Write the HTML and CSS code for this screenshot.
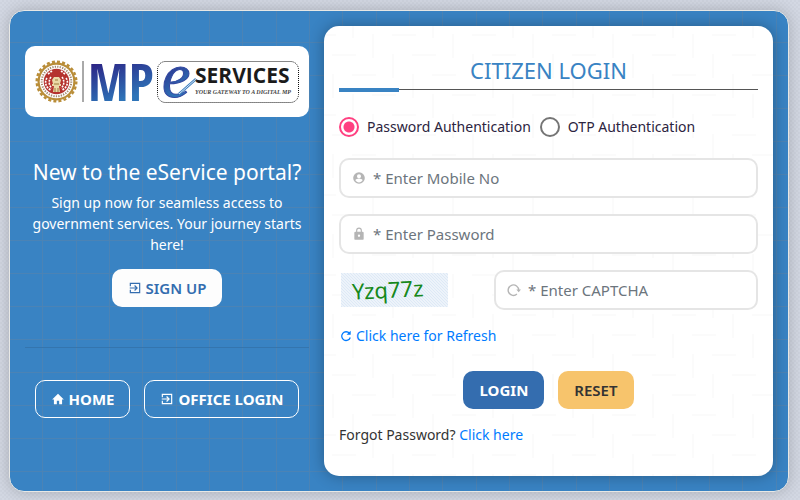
FILE: index.html
```html
<!DOCTYPE html>
<html lang="en">
<head>
<meta charset="utf-8">
<meta name="viewport" content="width=device-width, initial-scale=1">
<title>MP eServices - Citizen Login</title>
<link rel="stylesheet" href="styles.css">
</head>
<body>
<svg class="defs" aria-hidden="true">
  <symbol id="enter" viewBox="0 0 24 24"><path fill="currentColor" d="M3 3h18v18H3v-6h2v4h14V5H5v4H3zm9 4l5 5-5 5-1.400-1.400L13.200 13H3v-2h10.200l-2.600-2.600z"/></symbol>
  <symbol id="home" viewBox="0 0 24 24"><path fill="currentColor" d="M12 3L2 13h3v8h5v-6h4v6h5v-8h3z"/></symbol>
  <symbol id="user" viewBox="0 0 24 24"><path fill="currentColor" fill-rule="evenodd" d="M12 2a10 10 0 1 0 0 20 10 10 0 0 0 0-20zm0 3.500a3.500 3.500 0 1 1 0 7 3.500 3.500 0 0 1 0-7zM12 19.500c-2.700 0-5-1.400-6.200-3.500.1-2 4.200-3.200 6.200-3.200s6.100 1.200 6.200 3.200c-1.200 2.100-3.500 3.500-6.200 3.500z"/></symbol>
  <symbol id="lock" viewBox="0 0 24 24"><path fill="currentColor" fill-rule="evenodd" d="M18 8h-1V6A5 5 0 0 0 7 6v2H6a2 2 0 0 0-2 2v10a2 2 0 0 0 2 2h12a2 2 0 0 0 2-2V10a2 2 0 0 0-2-2zM9 6a3 3 0 0 1 6 0v2H9zm3 7a2 2 0 1 1 0 4 2 2 0 0 1 0-4z"/></symbol>
  <symbol id="rotate" viewBox="0 0 24 24"><path fill="none" stroke="currentColor" stroke-width="2.400" d="M17 19A9 9 0 1 1 20 12"/><path fill="currentColor" d="M16 11h8l-4 5z"/></symbol>
  <symbol id="refresh" viewBox="0 0 24 24"><path fill="none" stroke="currentColor" stroke-width="2.200" d="M18 7.500a7.500 7.500 0 1 0 1.300 7"/><path fill="currentColor" d="M20 3v7h-7z"/></symbol>
</svg>
<main class="shell">
  <section class="intro">
    <div class="brand">
      <svg class="logo" viewBox="0 0 264 43" role="img" aria-label="MP eServices, your gateway to a digital MP">
        <defs>
          <linearGradient id="ink" x1="0" y1="0" x2="0.300" y2="1"><stop offset="0.200" stop-color="#2c1c80"/><stop offset="0.850" stop-color="#2e74b8"/></linearGradient>
        </defs>
        <circle cx="21.500" cy="21.500" r="19" fill="#b98d38"/>
        <circle cx="21.500" cy="21.500" r="19.800" fill="none" stroke="#b98d38" stroke-width="2.400" stroke-dasharray="3 2.180"/>
        <circle cx="21.500" cy="21.500" r="16.800" fill="#fff"/>
        <circle cx="21.500" cy="21.500" r="14.800" fill="none" stroke="#a58b70" stroke-width="2" stroke-dasharray="1.300 1.200"/>
        <circle cx="21.500" cy="21.500" r="12.800" fill="#b5322e"/>
        <path d="M12 18c-3 4-1 10 4 12M16 17c-3 4-2 9 1 11M31 18c3 4 1 10-4 12M27 17c3 4 2 9-1 11M13 14l4-3M30 14l-4-3" stroke="#fff" stroke-width="1.600" fill="none" stroke-dasharray="2 1"/>
        <path d="M19 17h5l2 3-1 4h1v2h-2l1 6h-7l1-6h-2v-2h1l-1-4z" fill="#ead9a8"/>
        <path d="M20 20h3M19 24h5M20 28v4M23 28v4" stroke="#9f7b3b" stroke-width="1"/>
        <path d="M48 1v41" stroke="#555" stroke-width="1"/>
        <text class="logo-mp" x="53" y="41" fill="url(#ink)">MP</text>
        <rect x="122.500" y="1.500" width="141" height="41" rx="8" fill="none" stroke="#111" stroke-dasharray="1 1"/>
        <text class="logo-e" x="127" y="37" fill="url(#ink)">e</text>
        <path d="M144 34l17-15" stroke="#3b7dc0" stroke-width="2.400"/>
        <path d="M144 34l17-15" stroke="#fff" stroke-width="0.800"/>
        <text class="logo-name" x="160" y="23">SERVICES</text>
        <text class="logo-line" x="160" y="34">YOUR GATEWAY TO A DIGITAL MP</text>
      </svg>
    </div>
    <h2 class="intro-title">New to the eService portal?</h2>
    <p class="intro-text">Sign up now for seamless access to government services. Your journey starts here!</p>
    <a class="btn signup" href="#signup"><svg class="icon"><use href="#enter"/></svg>SIGN UP</a>
    <hr class="rule">
    <nav class="links">
      <a class="btn outline" href="#home"><svg class="icon"><use href="#home"/></svg>HOME</a>
      <a class="btn outline" href="#office"><svg class="icon"><use href="#enter"/></svg>OFFICE LOGIN</a>
    </nav>
  </section>
  <form class="panel">
    <h1 class="title">CITIZEN LOGIN</h1>
    <div class="modes">
      <label class="mode"><input type="radio" name="mode" checked>Password Authentication</label>
      <label class="mode"><input type="radio" name="mode">OTP Authentication</label>
    </div>
    <label class="field"><svg class="icon"><use href="#user"/></svg><input type="text" placeholder="* Enter Mobile No" aria-label="Mobile No"></label>
    <label class="field"><svg class="icon"><use href="#lock"/></svg><input type="password" placeholder="* Enter Password" aria-label="Password"></label>
    <div class="check">
      <svg class="captcha" viewBox="0 0 107 34">
        <defs><pattern id="weave" width="3" height="3" patternUnits="userSpaceOnUse"><rect width="3" height="3" fill="#edf3fa"/><path d="M0 0l3 3" stroke="#dde9f6" stroke-width="1"/></pattern></defs>
        <rect width="107" height="34" fill="url(#weave)"/>
        <text class="captcha-text" x="11" y="25" transform="rotate(-3 47 17)">Yzq77z</text>
      </svg>
      <label class="field"><svg class="icon"><use href="#rotate"/></svg><input type="text" placeholder="* Enter CAPTCHA" aria-label="CAPTCHA"></label>
    </div>
    <a class="refresh" href="#refresh"><svg class="icon"><use href="#refresh"/></svg>Click here for Refresh</a>
    <div class="actions">
      <button class="btn login" type="submit">LOGIN</button>
      <button class="btn reset" type="reset">RESET</button>
    </div>
    <p class="forgot">Forgot Password? <a href="#forgot">Click here</a></p>
  </form>
</main>
</body>
</html>
```
FILE: styles.css
```css
* { box-sizing: border-box; }

body {
  margin: 0;
  padding: 10px 11px 8px 9px;
  min-height: 100vh;
  display: flex;
  font: 14px/21px "Noto Sans", sans-serif;
  color: #333;
  background: repeating-conic-gradient(#ced3de 0 25%, #d3d8e3 0 50%) 0 0 / 4px 4px;
}

a { color: #007bff; text-decoration: none; }
h1, h2, p { margin: 0; font-weight: 400; }
.defs { position: absolute; width: 0; height: 0; }
.icon { width: 14px; height: 14px; flex: none; }

.shell {
  flex: 1;
  display: grid;
  grid-template-columns: 314px 1fr;
  padding: 15px 15px 15px 0;
  border: 1px solid #e8e8e5;
  border-radius: 15px;
  background:
    repeating-linear-gradient(90deg, transparent 0 32px, #4b83b5 32px 33px, transparent 33px 66px, #4b83b5 66px 67px, transparent 67px 99px, #4b83b5 99px 100px),
    repeating-linear-gradient(transparent 0 31px, #4b83b5 31px 32px, transparent 32px 33px),
    #3983c3;
  box-shadow: 0 0 15px rgba(0, 0, 0, .2);
}

.intro {
  display: flex;
  flex-direction: column;
  align-items: center;
  padding: 20px 15px 0;
  color: #fff;
  text-align: center;
}

.brand {
  width: 100%;
  padding: 14px 10px;
  border-radius: 10px;
  background: #fff;
}
.logo { display: block; width: 100%; overflow: visible; }
.logo-mp { font: 700 52px "Liberation Sans Narrow", "Open Sans Condensed", "Roboto Condensed", "DejaVu Sans Condensed", sans-serif; }
.logo-e { font: italic 400 64px "Liberation Serif", serif; stroke: #3348a0; stroke-width: 1px; }
.logo-name { font: 700 21px "Open Sans", sans-serif; fill: #1b1b1b; }
.logo-line { font: italic 700 6px "Liberation Serif", serif; fill: #444; }

.intro-title { margin-top: 40px; font-size: 21px; line-height: 30px; white-space: nowrap; }
.intro-text { margin-top: 5px; }

.btn {
  display: inline-flex;
  align-items: center;
  justify-content: center;
  gap: 4px;
  height: 38px;
  padding: 0 15px;
  border: 1px solid transparent;
  border-radius: 10px;
  font: 600 15px/21px "Noto Sans", sans-serif;
  white-space: nowrap;
}
.signup { margin-top: 14px; background: #fdfdfd; color: #346daf; }
.rule { width: 100%; margin: 40px 0 32px; border: 0; border-top: 1px solid #3475ae; }
.links { display: flex; gap: 14px; }
.outline { border-color: #fff; color: #fff; font-weight: 700; }

.panel {
  padding: 27px 15px 0;
  border-radius: 15px;
  background: #fff url("data:image/svg+xml,%3Csvg xmlns='http://www.w3.org/2000/svg' width='80' height='80'%3E%3Cpath fill='none' stroke='%23fbfbfb' stroke-width='2' d='M8 29h24M28 49h24M48 69h24M68 9h24M-12 9h24M9 48v24M29 68v24M29-12v24M49 8v24M69 28v24'/%3E%3C/svg%3E");
  box-shadow: 0 0 15px rgba(0, 0, 0, .3);
}
.title {
  padding-bottom: 2px;
  border-bottom: 1px solid #555;
  font-size: 22px;
  line-height: 34px;
  text-align: center;
  color: #3983c3;
  position: relative;
}
.title::after {
  content: "";
  position: absolute;
  left: 0;
  bottom: -3px;
  width: 60px;
  height: 4px;
  background: #3983c3;
}

.modes { display: flex; gap: 9px; margin: 26px 0 21px; color: #2c2440; }
.mode { display: flex; align-items: center; gap: 8px; white-space: nowrap; }
.mode input {
  appearance: none;
  width: 20px;
  height: 20px;
  margin: 0;
  border: 2px solid #757575;
  border-radius: 50%;
}
.mode input:checked { border-color: #ff4081; background: radial-gradient(#ff4081 5px, transparent 6px); }

.field {
  display: flex;
  align-items: center;
  gap: 7px;
  height: 40px;
  margin-bottom: 16px;
  padding: 0 11px;
  border: 2px solid #e5e5e5;
  border-radius: 10px;
  background: #fff;
  color: #b5b5b5;
}
.field input {
  flex: 1;
  min-width: 0;
  padding: 0;
  border: 0;
  outline: 0;
  background: none;
  font: 15px/21px "Noto Sans", sans-serif;
  color: #333;
}
.field input::placeholder { color: #6c757d; opacity: 1; }

.check { display: grid; grid-template-columns: 107px 264px; justify-content: space-between; padding-left: 2px; }
.check .field { margin: 0; }
.captcha { width: 107px; height: 34px; margin-top: 3px; }
.captcha-text { font: 22px "Noto Sans", sans-serif; fill: #16881b; }

.refresh { display: flex; align-items: center; gap: 3px; margin-top: 15px; }
.actions { display: flex; justify-content: center; gap: 14px; margin-top: 25px; }
.login { background: #346daf; color: #fff; font-weight: 700; }
.reset { background: #f7c46c; color: #333; }
.forgot { margin-top: 15px; }
```
